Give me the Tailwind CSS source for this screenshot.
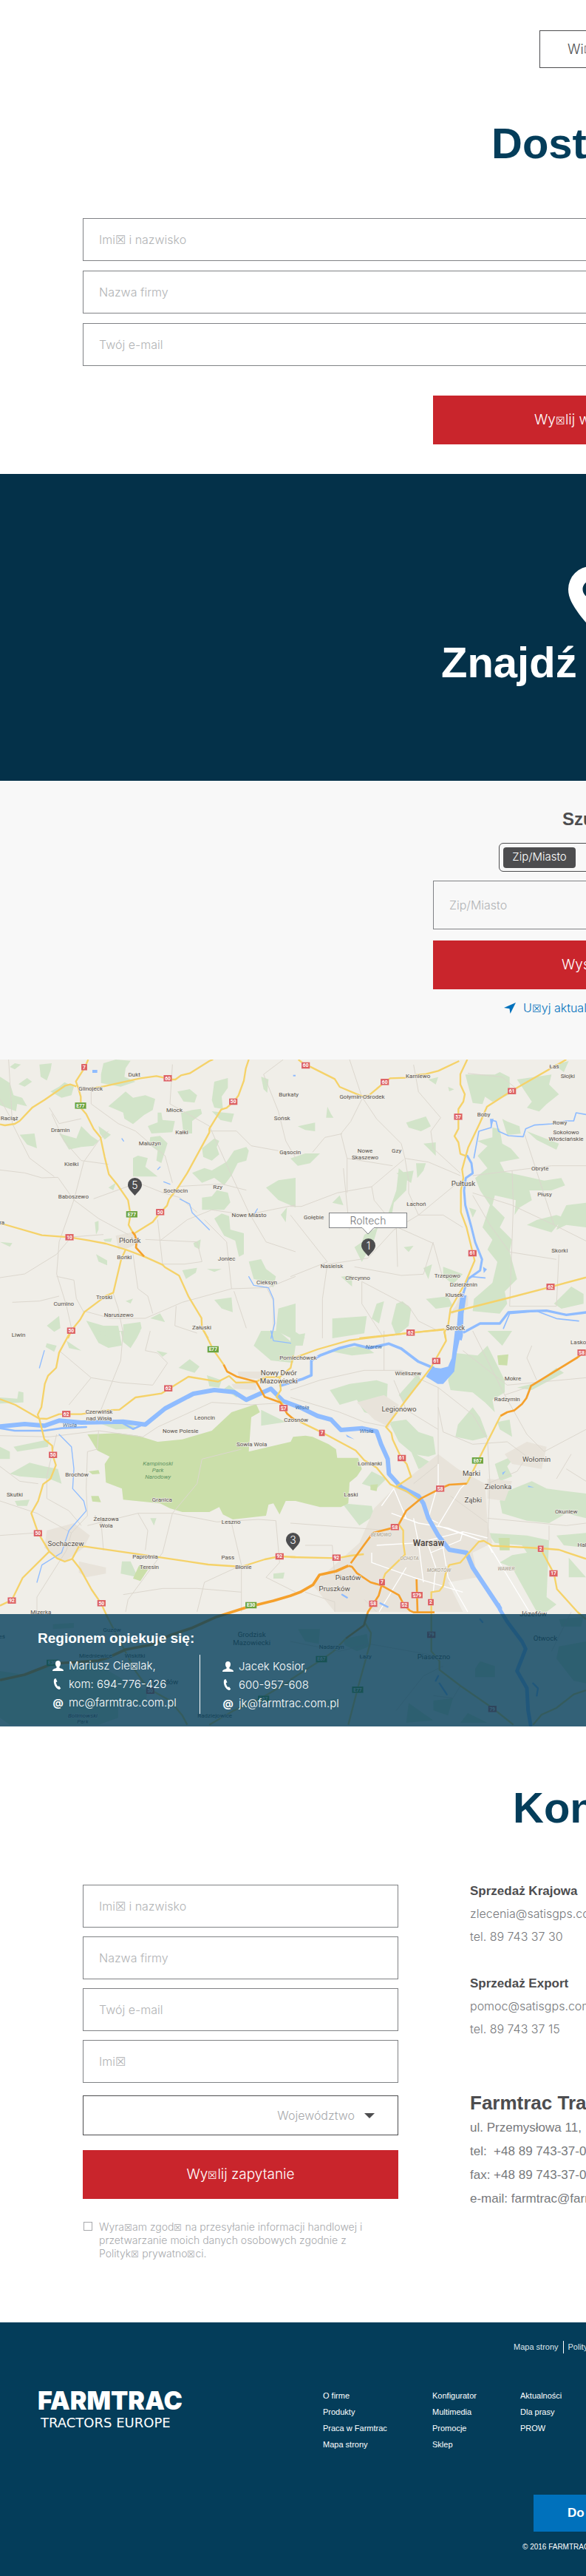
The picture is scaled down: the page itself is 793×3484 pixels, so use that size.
<!DOCTYPE html>
<html lang="pl">
<head>
<meta charset="utf-8">
<meta name="viewport" content="width=device-width, initial-scale=1">
<title>Farmtrac Tractors Europe</title>
<script src="https://cdn.jsdelivr.net/npm/@tailwindcss/browser@4"></script>
</head>
<body class="overflow-x-hidden bg-white font-['Liberation_Sans',Arial,sans-serif] text-[17px] text-[#4d4d4f]">

<section class="overflow-hidden pt-[41px] pb-10">
  <div class="pl-[730px]">
    <a href="#wiecej" class="flex h-[51px] w-[140px] items-center whitespace-nowrap border border-[#4d4d4f] pl-[37px] font-['Inter'] text-lg font-light">Wi<span class="text-sm leading-none">☒</span>cej</a>
  </div>
  <h2 class="mt-[72px] whitespace-nowrap pl-[665px] text-[58px] leading-[60px] font-bold text-[#043d5a]">Dostępne</h2>
  <form class="mt-[71px] font-['Inter'] text-base font-light">
    <div class="flex min-w-[1600px] flex-col gap-[13px] px-28">
      <input aria-label="Imię i nazwisko" placeholder="Imi☒ i nazwisko" class="h-[58px] border border-[#808285] px-[21px] placeholder:text-[#b1b3b5]">
      <input aria-label="Nazwa firmy" placeholder="Nazwa firmy" class="h-[58px] border border-[#808285] px-[21px] placeholder:text-[#b1b3b5]">
      <input aria-label="Twój e-mail" type="email" placeholder="Twój e-mail" class="h-[58px] border border-[#808285] px-[21px] placeholder:text-[#b1b3b5]">
    </div>
    <div class="mt-10 pl-[586px]">
      <button type="button" class="h-[66px] w-[428px] whitespace-nowrap bg-[#c9252c] pl-[137px] text-left text-[19px] text-white">Wy<span class="text-sm leading-none">☒</span>lij wiadomo<span class="text-sm leading-none">☒</span>ć</button>
    </div>
  </form>
</section>

<section class="overflow-hidden bg-[#043149] pt-[125px] pb-[130px] text-white">
  <div class="pl-[769px]">
    <svg class="h-[84px] w-[62px]" viewBox="0 0 62 84" aria-hidden="true"><path fill="#fff" fill-rule="evenodd" d="M31 0a31 31 0 0 0-31 31c0 12 6 21 15 34 6 8 12 14 16 19 4-5 10-11 16-19 9-13 15-22 15-34A31 31 0 0 0 31 0Zm0 19.500a11.500 11.500 0 1 1 0 23 11.500 11.500 0 0 1 0-23Z"/></svg>
  </div>
  <h2 class="mt-4 whitespace-nowrap pl-[597px] text-[58px] leading-[60px] font-bold">Znajdź dealera</h2>
</section>

<section class="overflow-hidden bg-[#f8f8f8] pt-9 pb-[58px]">
  <h3 class="whitespace-nowrap pl-[761px] text-2xl leading-8 font-bold">Szukaj po</h3>
  <div class="mt-4 pl-[675px]">
    <div class="flex h-[39px] w-[250px] items-center rounded-md border border-[#4d4d4f] px-[5px]">
      <button type="button" class="h-7 w-[98px] rounded bg-[#4d4d4f] font-['Inter'] text-[15px] font-light text-white">Zip/Miasto</button>
    </div>
  </div>
  <div class="mt-3 flex flex-col gap-[15px] pl-[586px] font-['Inter'] font-light">
    <input aria-label="Zip/Miasto" placeholder="Zip/Miasto" class="h-[66px] w-[428px] border border-[#808285] px-[21px] text-base placeholder:text-[#b1b3b5]">
    <button type="button" class="h-[66px] w-[428px] bg-[#c9252c] pl-[174px] text-left text-[19px] text-white">Wyszukaj</button>
  </div>
  <a href="#lokalizacja" class="mt-[13px] flex items-center gap-[10px] whitespace-nowrap pl-[682px] font-['Inter'] text-base leading-6 font-light text-[#0071bc]">
    <svg class="h-[15px] w-4 shrink-0" viewBox="0 0 16 15" aria-hidden="true"><path fill="#0071bc" d="M16 0 0 7l7.500 1.200L8.500 15Z"/></svg>
    <span>U<span class="text-sm leading-none">☒</span>yj aktualnej lokalizacji</span>
  </a>
</section>

<section class="relative h-[902px] overflow-hidden bg-[#f0eee8]" aria-label="Mapa dealerów">
  <svg class="block h-full w-full" viewBox="0 0 2379 2706" preserveAspectRatio="xMidYMid slice" font-family="Roboto, sans-serif">
    <!-- woodland -->
    <g fill="#d2e4c9">
      <path d="M0 70 40 95 55 145 90 155 110 190 70 180 65 210 0 185ZM160 20 210 15 205 45 190 85 165 70ZM75 100 110 75 130 90 100 110ZM205 130 240 110 262 92 300 110 290 145 250 155ZM410 60 420 15 470 0 530 5 510 35 505 70 550 90 490 110 410 95ZM440 190 510 130 540 155 590 145 630 160 620 205 585 225 540 262 505 240 500 215ZM720 130 770 120 800 145 790 175 745 170ZM870 90 925 75 925 115 900 150 905 200 870 195 860 165ZM600 270 640 255 640 215 655 215 660 245 710 250 700 295 615 300ZM735 215 780 205 815 200 820 220 780 250 780 300 745 300ZM860 210 950 220 940 255 895 245ZM240 300 310 320 330 270 370 310 400 330 380 350 330 355 280 365ZM400 270 450 305 425 325 405 300ZM540 400 560 390 600 400 590 435 640 475 540 475ZM610 315 650 310 680 340 655 420 635 410 640 370 605 345ZM820 360 870 320 890 330 880 355 890 385 860 410 825 395ZM780 460 830 440 860 450 920 415 950 370 1000 355 1010 370 1000 410 965 420 940 470 910 510 870 480 820 500ZM820 560 860 555 880 530 925 540 935 580 910 610 820 610ZM1080 520 1130 490 1200 480 1200 600 1130 570ZM870 645 900 625 930 635 935 690 990 705 990 790 970 800 955 735 910 715ZM1010 820 1060 810 1080 850 1120 880 1110 925 1070 900 1030 890ZM870 975 940 965 945 1025 900 1010ZM80 305 140 300 150 360 110 345ZM85 20 60 40 40 30 60 15ZM385 660 400 655 400 690 390 710ZM390 790 435 815 435 835 400 820ZM420 730 455 725 450 740 425 738ZM740 855 800 845 795 865 755 890ZM785 745 815 730 810 770 790 760ZM840 850 900 850 870 862ZM190 1080 240 1040 245 1090 220 1105ZM350 1060 420 1080 480 1080 495 1160 440 1170 400 1150ZM500 1075 570 1065 575 1090 540 1150 500 1130ZM0 740 50 745 40 760ZM1060 70 1090 80 1085 135 1070 120ZM440 520 470 500 460 530ZM510 980 540 970 530 990ZM610 1050 650 1030 670 1065ZM1140 630 1165 600 1160 660ZM1130 1010 1200 990 1200 1140 1120 1100Z"/>
      <g transform="translate(1179 -9)"><path d="M560 90 600 80 590 110ZM640 120 665 130 645 138ZM710 70 830 70 850 60 890 80 890 150 820 180 790 160 780 190 740 185ZM920 90 1060 70 1050 110 1090 150 1040 190 1010 220 960 205 980 180ZM1070 30 1130 15 1110 60ZM150 200 165 230 175 245 145 245ZM470 265 550 240 570 280 530 300 480 285ZM540 350 590 345 590 400 560 370ZM30 280 100 265 100 300 60 295ZM820 285 850 290 860 350 895 370 930 410 850 425 870 465 940 480 1030 500 1100 490 1115 520 1060 540 970 540 980 580 930 610 910 640 915 580 830 560 820 600 870 650 850 690 900 740 890 790 920 900 870 950 880 1000 850 1040 740 1030 745 980 820 915 840 830 800 780 820 740 780 690 810 600 770 540 750 490 800 450 760 400 800 360 760 340 820 325ZM860 250 880 260 930 280 935 310 880 315ZM960 300 1090 350 1080 375 1000 335ZM510 430 550 430 540 460 515 490ZM440 450 475 480 470 540 420 590 410 650 395 640 430 540ZM430 470 500 460 490 510ZM1120 600 1200 590 1200 690 1120 680 1080 700 1100 640ZM1000 660 1080 640 1110 650 1060 710 960 680ZM725 610 755 620 740 650ZM260 770 290 750 300 720 355 690 340 740 290 830ZM0 410 60 390 120 390 80 430 30 440ZM170 590 200 560 215 600ZM540 855 575 840 560 900ZM620 850 700 880 660 920 620 890ZM460 770 500 765 480 790ZM205 890 250 885 250 930ZM550 980 640 970 660 1010 590 1020ZM410 1080 430 1000 455 990 490 1020 480 1090 430 1130ZM1070 1000 1140 930 1190 960 1190 1000 1100 1020ZM170 1060 310 1050 300 1120 170 1140ZM350 1000 380 990 360 1080 330 1060ZM0 1100 60 1140 0 1140Z"/></g>
      <g transform="translate(0 1101)"><path d="M380 5 430 0 490 0 460 35 440 25ZM490 0 570 0 555 30 530 70 500 45ZM725 150 770 115 810 145 790 170ZM635 80 680 90 660 105ZM0 270 70 275 75 245 95 250 95 290 0 295ZM40 580 120 535 180 550 235 560 250 620 200 600 80 590ZM0 470 40 490 40 520 0 520ZM55 470 200 440 195 470 70 490ZM390 370 520 375 560 395 470 400ZM495 935 530 935 560 1000 490 985ZM1060 0 1130 0 1200 60 1190 130 1100 120 1030 60ZM1060 320 1130 355 1160 370 1060 385ZM190 50 230 60 220 85 185 65ZM270 40 330 80 280 70ZM60 690 120 685 110 710 70 710ZM610 760 635 760 625 790ZM1110 985 1155 980 1150 1005 1110 1005ZM840 180 900 200 890 230 850 225ZM930 220 980 260 960 270 910 235Z"/></g>
      <g transform="translate(1179 1101)"><path d="M160 240 240 215 350 200 395 215 390 300 370 350 300 330 270 280 200 300ZM400 370 470 360 520 410 580 430 590 500 560 510 500 500 440 450ZM440 260 520 170 530 210 460 290ZM670 90 760 100 800 60 820 100 870 200 870 250 820 280 830 330 790 290 740 250 650 240 640 200ZM680 380 740 310 770 350 800 430 740 445 670 430ZM800 0 900 0 860 60ZM920 230 1000 210 1080 150 1110 170 980 240ZM840 370 890 360 900 430 850 400ZM830 540 920 500 880 550 900 590 850 610ZM880 650 980 610 1040 640 1200 660 1200 760 1120 740 1050 780 960 770 860 740 850 690ZM490 490 580 540 520 560ZM290 620 330 570 390 600 350 640ZM210 700 330 710 340 750 280 790ZM800 820 960 830 1050 850 1040 1080 1080 1110 1040 1140 1000 1140 900 960 850 940 900 910 960 900 940 870 830 860ZM1080 830 1200 820 1200 880 1110 870ZM150 80 300 60 340 90 250 100ZM0 20 60 10 50 60 0 60ZM1130 920 1200 1000 1130 1000Z"/></g>
      <g transform="translate(1179 2001)"><path d="M30 310 120 310 115 370 60 360ZM215 350 310 330 320 380 270 400 220 375ZM750 470 770 440 830 460 830 505 750 505ZM1080 430 1090 380 1200 360 1200 530 1150 520ZM580 600 660 590 640 660 580 640ZM480 610 580 680 470 690ZM1090 270 1190 260 1180 300 1100 300ZM720 650 800 690 690 690ZM130 600 190 590 180 640Z"/></g>
      <path transform="translate(0 2151)" d="M0 330 100 345 200 310 390 300 510 370 600 410 590 460 480 470 480 520 400 548 40 548 0 520ZM215 140 300 135 300 155 215 160Z"/>
    </g>
    <path fill="#cbdfaa" transform="translate(0 1101)" d="M355 420 480 415 560 425 640 450 740 440 860 405 940 330 1040 297 1055 330 1020 350 1010 490 1180 450 1190 430 1240 425 1269 430 1334 460 1364 480 1369 515 1454 515 1469 560 1449 590 1419 615 1414 700 1384 715 1299 715 1200 690 1160 690 1135 745 1110 700 1090 705 1080 750 945 765 905 745 890 715 850 735 740 735 690 720 650 700 500 685 495 640 430 615 425 540 445 510 395 485ZM565 950 610 955 570 1015 540 1005ZM360 570 400 565 405 580 375 582ZM370 670 400 670 410 695 375 692Z"/>
    <path fill="#cbdfaa" transform="translate(1179 1101)" d="M650 640 690 640 685 665 650 662ZM590 700 620 695 615 720 595 722ZM840 100 885 95 880 140 845 138ZM845 840 890 840 890 890 850 890ZM325 625 355 622 350 650 325 645Z"/>
    <!-- built-up land -->
    <g fill="#e8e3da">
      <path transform="translate(0 1101)" d="M965 165 1100 165 1060 195 970 190ZM320 935 430 960 430 985 350 1000 320 980ZM190 810 300 780 365 830 340 880 260 940 180 880ZM940 215 1040 210 1040 240 950 235Z"/>
      <path transform="translate(1179 1101)" d="M270 290 380 260 440 300 400 390 340 360ZM420 640 500 580 600 500 680 560 790 620 800 780 820 860 740 900 760 1000 640 1020 700 1140 180 1140 90 1030 280 860 340 720ZM870 500 960 450 1040 470 1020 560 900 540ZM800 600 900 610 870 690 800 680Z"/>
      <path d="M470 715 540 700 570 740 520 765 480 770ZM1820 1040 1900 1000 1900 960 1870 950 1850 1000Z"/>
    </g>
    <!-- local roads -->
    <g fill="none" stroke="#dcd7ce" stroke-width="3" stroke-linejoin="round">
      <path d="M35 0 45 170 50 260 120 400 220 475M0 448 100 460 170 480 235 478 300 570 400 645 520 710M300 570 340 415 400 330 440 290M45 240 0 160M200 195 240 260 330 240M210 220 260 330 330 410 440 425M370 110 370 180 480 260 550 290 620 350 670 390 700 500M300 570 240 740 230 870 270 1000 290 1090M0 885 100 870 230 790 290 720 420 710M230 880 300 895 310 970 340 1025M50 985 160 980 240 960M700 20 690 180 850 270 940 470 1010 620 1080 740 1200 780M850 290 960 290 1020 350 1130 370M1150 0 1070 60 1130 210 1160 330 1200 400M380 565 560 500 660 540 730 560 800 620M720 515 900 505 1000 530M640 650 660 830 750 830 820 820 800 740 590 730M650 735 760 650 860 610 1000 630 1200 590M540 790 560 930 600 960 620 1030M940 930 920 740 830 650M460 950 480 1010 500 1110M340 1020 450 1050 590 1050 740 985 940 930 1090 925 1200 880M715 1000 710 1080 800 1110M950 940 1000 1090M1080 920 1110 980 1110 1100"/>
      <g transform="translate(1179 -9)"><path d="M240 9 290 160 350 250 450 350 465 410 560 425 690 480M290 170 245 260 205 310 230 410 415 440M90 385 140 325 210 310M500 30 520 140 610 245 570 300 580 370 690 470M230 410 230 550M0 605 45 605 190 550 330 525 460 415M330 525 340 580 430 690 435 850M465 410 480 500 480 550 520 640M240 700 215 450M0 640 150 830 0 890M520 640 620 640 700 690M420 700 520 640 690 500M150 840 315 815 420 700M150 840 130 980 130 1140M290 910 290 1000 380 1140M290 910 480 1010 520 1070 600 1110M260 850 450 885 540 880 580 750M740 550 900 600 1070 680 1200 745M740 480 900 460 1060 440 1200 440M900 460 905 600 890 1010 1080 1010 1090 800M740 560 810 680 890 790 1080 820M1070 680 950 310M920 130 860 80 720 65M435 690 580 755 620 900"/></g>
      <g transform="translate(0 1101)"><path d="M0 425 200 430 400 405 580 430 640 390 860 290 1020 300 1180 290M400 405 395 480 355 490 350 640 355 750 290 820 270 890 150 1080 150 1140M355 790 560 740 700 740 880 775 1050 765 1120 770 1135 940M500 0 490 120 410 320M330 790 280 730 190 680 190 590 230 420M0 690 150 740 290 820M700 740 800 620 820 520 980 480M940 780 980 950 980 1140M0 830 140 820M700 740 660 900 520 1090 510 1140M410 770 420 890M560 740 600 810 590 890M0 550 80 610 155 620M370 190 490 210 620 220 680 130 640 90 590 80 610 0M240 80 370 190 280 300M500 1070 660 1045 800 1045 980 1060M800 1140 830 1020 960 960M1135 940 1080 1000 1200 1060"/></g>
      <g transform="translate(1179 1101)"><path d="M0 240 120 200 300 160 450 160 600 230 740 340 800 440 810 620 800 860M0 270 200 330 300 370 400 390M600 230 600 540 500 620M600 310 620 410 740 460 880 450 960 510M740 0 870 260 960 230M870 260 960 420 1030 490 1200 400M800 620 920 570 960 510M700 80 880 220 1200 190M380 0 380 160M420 200 470 320 600 400M0 780 270 800 400 810M60 870 170 870 180 1000M800 760 1120 790 1200 780M1080 600 1140 500M1200 610 1120 560M980 60 960 110 1000 200M650 670 800 780M1050 850 1050 790M60 1060 180 1100 180 1140M350 1140 300 1090"/></g>
      <path transform="translate(1179 2001)" d="M0 360 200 400 320 370 600 420M690 540 660 590 580 580M1140 240 1060 400M430 640 540 500 620 460"/>
    </g>
    <g fill="none" stroke="#fff" stroke-width="4" transform="translate(1179 1101)">
      <path d="M410 740 520 780 640 800 800 860M350 870 520 860 700 815 800 840M330 900 330 940 500 1000 600 1030 700 1060M500 760 520 860 540 1020M600 790 690 640 710 620M370 710 420 640M420 640 470 760M600 540 600 620 560 760 600 780M560 870 590 960 580 1060M620 880 640 1000 720 1140M700 815 690 850 570 900M800 860 970 1140M470 960 360 1140M820 900 800 860 600 790"/>
    </g>
    <!-- rivers -->
    <g fill="none" stroke="#8fbcff" stroke-linejoin="round" stroke-linecap="round">
      <path transform="translate(0 1101)" stroke-width="18" d="M0 388 100 378 180 385 240 364 330 372 500 368 590 380 670 315 785 255 870 240 950 248 1000 280 1040 262 1100 235 1150 285 1219 311 1289 345 1344 360 1384 402 1469 395 1529 408 1547 460 1574 520 1579 580 1629 635 1699 670 1719 700 1739 760 1779 830 1824 888 1894 900 1919 960 1969 1035 2029 1125"/>
      <path transform="translate(0 1101)" stroke-width="8" d="M0 395 60 405 180 405 250 395 350 390M490 370 540 398 570 385"/>
      <path transform="translate(1179 2001)" stroke-width="15" d="M850 230 880 280 940 360 955 390 920 480 960 550 965 640 975 698"/>
      <path transform="translate(1179 2001)" stroke-width="7" d="M770 270 780 282M590 520 600 500M605 530 635 575M985 530 1005 550 1000 580M210 170 230 182M365 205 395 220"/>
      <path transform="translate(1179 1101)" stroke-width="11" d="M-40 222 50 195 85 180 85 120 120 100 200 70 260 55 320 70 400 52 450 72 520 125 580 150"/>
      <path transform="translate(1179 -9)" stroke-width="9" d="M700 965 720 900 770 865 778 820 750 750 735 690 710 600 705 540 712 490 740 470 735 430 718 400"/>
      <path transform="translate(1179 -9)" stroke-width="5" d="M745 408 765 300 815 285 815 255 835 260 845 300 885 318 945 322 955 290 990 275 1060 270 1120 258 1150 258 1160 225 1200 232M735 890 790 895M865 1100 890 1040 1000 1030 1080 1060 1170 1070"/>
      <path transform="translate(1179 -9)" stroke-width="10" d="M705 1115 770 1080 850 1080 885 1035 960 1030 1040 1028 1120 1045 1200 1035"/>
      <path transform="translate(0 -9)" stroke-width="4" d="M730 575 770 595 780 630 850 700M1030 640 1045 615M665 505 690 515M640 455 650 445M495 330 502 340M1010 890 1030 925 1090 935 1110 980 1115 1080 1100 1140"/>
      <path transform="translate(0 1101)" stroke-width="4" d="M240 420 290 470 300 560 295 640 340 690 350 730 280 810 250 900 170 950 150 1020M1100 0 1110 40 1180 50M180 80 160 150"/>
    </g>
    <g fill="#8fbcff">
      <path transform="translate(1179 1101)" d="M550 185 575 148 610 152 640 145 655 110 668 0 695 0 675 90 665 165 620 215 598 215ZM850 1105 862 1140 835 1110ZM225 420 260 440 230 430ZM860 575 875 568 862 585ZM965 628 990 635 965 634Z"/>
      <path transform="translate(1179 -9)" d="M690 970 715 965 703 1040 700 1130 695 1150 672 1140 680 1040ZM782 850 798 860 785 875ZM810 250 825 250 815 290Z"/>
      <path d="M375 42 395 42 395 54 375 54ZM1190 62 1200 62 1200 68 1190 68Z"/>
    </g>
    <!-- national roads -->
    <g fill="none" stroke="#f5d269" stroke-width="7" stroke-linejoin="round">
      <path transform="translate(0 -9)" d="M0 272 20 276 60 270 80 258 132 203 180 173 265 115 285 110 310 118M358 9 345 40 308 98 318 125 328 160 328 205 350 230 380 290 408 325 425 405 442 475 475 515 520 580 530 640 522 680 540 712M360 128 420 118 570 85 635 76 700 90 712 90 735 73 770 65 850 15 865 9M1010 9 998 45 990 95 968 155 947 182 920 205 898 212 850 290 850 305 760 470 718 535 687 575 678 602 650 630 620 668 545 715M0 675 18 678 170 722 282 730 360 743 430 756 510 780 585 808 660 842 670 852 727 886 765 970 818 1058 820 1100 845 1140M510 780 492 820 480 870 460 955 430 968 343 1033 325 1065 290 1108 276 1140"/>
      <path transform="translate(1179 -9)" d="M32 9 62 33 80 38 180 88 200 120 290 158 318 155 380 103 405 85 470 83 510 72 550 68 600 55 685 15M718 9 690 68 690 110 708 150 702 180 682 210 682 290 666 320 682 345 690 392 712 400M1120 9 900 135 798 200 770 265 722 365 712 400 697 455 702 490 692 540 692 628 715 690 748 825 710 915 650 1020 640 1090 625 1115 630 1140M1200 893 1056 932 890 975 652 1035M280 1140 490 1118 625 1103"/>
      <path transform="translate(0 1101)" d="M288 0 240 88 228 150 195 182 182 215 168 310 153 340 160 358 180 440 212 466 214 505 227 545 205 600 175 622 155 690 127 740 155 820 200 895 232 923 263 936 293 925 320 875 345 875 590 910 845 948 980 957 1075 927 1135 915 1200 918M293 925 325 965 372 1050 410 1105 440 1170M200 895 92 1002 48 1092 0 1115M0 277 62 300 157 355 190 357 240 338 330 338 430 322 485 320 550 270 655 254 765 186 885 206 930 183 958 210 1035 208 1080 188 1135 188 1180 150 1190 100M828 0 865 75 908 137M1135 188 1140 240 1122 268 1150 300"/>
      <path transform="translate(1179 1101)" d="M0 115 110 75 240 38 485 8 625 -5M625 0 632 40 570 150 470 280 388 390 410 415 415 440 450 515 472 540 490 592 428 633M0 350 128 412 265 485 300 525 350 555 405 622 428 633 470 650 520 685M0 918 190 922 245 912 298 906M440 785 458 810 458 860 465 908 385 985 372 1020M853 345 765 520 716 620M1200 925 1090 888 1015 882 820 872 785 852 765 855 690 940 645 950 630 985 620 1035 605 1055 572 1060 572 1140M1015 882 1070 985 1082 1048 1165 1140"/>
      <path transform="translate(1179 2001)" d="M572 240 572 400 605 440 605 475 690 540 820 630 905 698M1165 240 1200 270M1200 558 1150 575 1080 630 1020 657 985 698M300 280 327 325 323 370 272 555 235 698M225 348 175 400 130 432 0 515"/>
      <path transform="translate(0 2151)" d="M430 100 500 235 550 330 600 400 690 450 740 510 760 548M850 548 950 490 1060 440 1180 370"/>
    </g>
    <g fill="none" stroke="#f5a02c" stroke-width="8" stroke-linejoin="round">
      <path d="M537 699 548 713 555 736 552 763 585 799"/>
      <path transform="translate(0 1101)" d="M908 137 922 165 960 185 1040 206 1075 268 1138 290 1165 335 1200 365"/>
      <path transform="translate(1179 1101)" d="M1200 80 1165 108 977 223 958 273 940 297 908 323 880 330 853 345M716 620 645 624 608 640 530 680 470 730 440 785 425 797 335 820 298 870 245 943M512 1008 516 1140M235 953 250 957 270 983 325 1020 370 1033 440 1072 460 1110 485 1135 500 1142 585 1142M370 1033 358 1075 315 1140 298 1195 225 1248"/>
      <path transform="translate(0 2151)" stroke-width="11" d="M0 367 100 345 215 300 400 288 440 275 510 243 620 222 690 185 780 155 880 110 1000 72 1110 45 1179 25 1219 10 1271 -20 1297 -60 1364 -75 1414 -97"/>
    </g>
    <g id="labels" fill="#57504a" stroke="#f0eee8" stroke-width="4" paint-order="stroke" text-anchor="middle"></g>
    <g id="shields" fill="#fff" font-weight="700" font-size="20" text-anchor="middle"></g>
  </svg>

  <div class="absolute top-[207px] left-[445px] flex h-[21px] w-[106px] items-center justify-center border border-[#808285] bg-white font-['Inter'] text-sm font-light text-[#77797c]">Roltech
    <svg class="absolute top-[19px] left-[44px] h-[10px] w-4" viewBox="0 0 16 10" aria-hidden="true"><path fill="#fff" d="M0 0h16v1L8 9 0 1Z"/><path fill="none" stroke="#808285" d="M0 .5 8 9 16 .5"/></svg>
  </div>
  <button type="button" aria-label="Dealer 5" class="absolute top-[160px] left-[173px] h-6 w-[19px] font-['Inter'] text-sm leading-[19px] font-light text-white">
    <svg class="absolute inset-0 h-full w-full" viewBox="0 0 19 24" aria-hidden="true"><path fill="#4d4d4f" d="M9.500 0A9.500 9.500 0 0 0 0 9.500C0 14 4 18 9.500 24 15 18 19 14 19 9.500A9.500 9.500 0 0 0 9.500 0Z"/></svg>
    <span class="absolute inset-x-0 top-0">5</span>
  </button>
  <button type="button" aria-label="Dealer 1" class="absolute top-[242px] left-[489px] h-6 w-[19px] font-['Inter'] text-sm leading-[19px] font-light text-white">
    <svg class="absolute inset-0 h-full w-full" viewBox="0 0 19 24" aria-hidden="true"><path fill="#4d4d4f" d="M9.500 0A9.500 9.500 0 0 0 0 9.500C0 14 4 18 9.500 24 15 18 19 14 19 9.500A9.500 9.500 0 0 0 9.500 0Z"/></svg>
    <span class="absolute inset-x-0 top-0">1</span>
  </button>
  <button type="button" aria-label="Dealer 3" class="absolute top-[640px] left-[387px] h-6 w-[19px] font-['Inter'] text-sm leading-[19px] font-light text-white">
    <svg class="absolute inset-0 h-full w-full" viewBox="0 0 19 24" aria-hidden="true"><path fill="#4d4d4f" d="M9.500 0A9.500 9.500 0 0 0 0 9.500C0 14 4 18 9.500 24 15 18 19 14 19 9.500A9.500 9.500 0 0 0 9.500 0Z"/></svg>
    <span class="absolute inset-x-0 top-0">3</span>
  </button>

  <div class="absolute inset-x-0 bottom-0 h-[152px] bg-[#043d5a]/80 pt-[21px] pl-[51px] text-white">
    <h3 class="text-[19px] leading-6 font-bold">Regionem opiekuje się:</h3>
    <div class="mt-[10px] flex h-20 font-['Inter'] text-[15px] leading-[25px] font-light">
      <ul class="w-[220px] border-r border-white pt-0.5 pl-5">
        <li class="flex items-center gap-[7px]"><svg class="h-[14px] w-[15px]" viewBox="0 0 15 14" aria-hidden="true"><path fill="#fff" d="M7.500 0C5.300 0 4 1.500 4 3.800c0 2 .7 3.600 1.700 4.400.2 1.300-.5 1.800-2 2.300C1.500 11.200 0 11.800 0 14h15c0-2.200-1.500-2.800-3.700-3.500-1.500-.5-2.200-1-2-2.300 1-.8 1.700-2.400 1.700-4.400C11 1.500 9.700 0 7.500 0Z"/></svg><span>Mariusz Cie<span class="text-xs leading-none">☒</span>lak,</span></li>
        <li class="flex items-center gap-[7px]"><svg class="h-[15px] w-[15px]" viewBox="0 0 15 15" aria-hidden="true"><path fill="#fff" d="M4.500 0 2.500.8C1 3.500 2 9.500 5.500 13c1.500 1.500 3 2 4 2l1.800-1.500L9 10.200 7.500 11C6 9.500 4.800 7 4.800 5l1.700-.6Z"/></svg>kom: 694-776-426</li>
        <li class="flex items-center gap-[7px]"><span class="w-[15px] text-center text-sm font-bold" aria-hidden="true">@</span>mc@farmtrac.com.pl</li>
      </ul>
      <ul class="pt-[3px] pl-[30px]">
        <li class="flex items-center gap-[7px]"><svg class="h-[14px] w-[15px]" viewBox="0 0 15 14" aria-hidden="true"><path fill="#fff" d="M7.500 0C5.300 0 4 1.500 4 3.800c0 2 .7 3.600 1.700 4.400.2 1.300-.5 1.800-2 2.300C1.500 11.200 0 11.800 0 14h15c0-2.200-1.500-2.800-3.700-3.500-1.500-.5-2.200-1-2-2.300 1-.8 1.700-2.400 1.700-4.400C11 1.500 9.700 0 7.500 0Z"/></svg>Jacek Kosior,</li>
        <li class="flex items-center gap-[7px]"><svg class="h-[15px] w-[15px]" viewBox="0 0 15 15" aria-hidden="true"><path fill="#fff" d="M4.500 0 2.500.8C1 3.500 2 9.500 5.500 13c1.500 1.500 3 2 4 2l1.800-1.500L9 10.200 7.500 11C6 9.500 4.800 7 4.800 5l1.700-.6Z"/></svg>600-957-608</li>
        <li class="flex items-center gap-[7px]"><span class="w-[15px] text-center text-sm font-bold" aria-hidden="true">@</span>jk@farmtrac.com.pl</li>
      </ul>
    </div>
  </div>
</section>

<section class="overflow-hidden pt-20 pb-[84px]">
  <h2 class="whitespace-nowrap pl-[694px] text-[58px] leading-[60px] font-bold text-[#043d5a]">Kontakt</h2>
  <div class="mt-[67px] flex gap-[97px] pl-28">
    <form class="w-[427px] shrink-0 pt-[7px] font-['Inter'] text-base font-light">
      <div class="flex flex-col gap-3">
        <input aria-label="Imię i nazwisko" placeholder="Imi☒ i nazwisko" class="h-[58px] border border-[#808285] px-[21px] placeholder:text-[#b1b3b5]">
        <input aria-label="Nazwa firmy" placeholder="Nazwa firmy" class="h-[58px] border border-[#808285] px-[21px] placeholder:text-[#b1b3b5]">
        <input aria-label="Twój e-mail" type="email" placeholder="Twój e-mail" class="h-[58px] border border-[#808285] px-[21px] placeholder:text-[#b1b3b5]">
        <input aria-label="Imię" placeholder="Imi☒" class="h-[58px] border border-[#808285] px-[21px] placeholder:text-[#b1b3b5]">
      </div>
      <div class="relative mt-[17px]">
        <select aria-label="Województwo" class="block h-[54px] w-full appearance-none border border-[#4d4d4f] bg-white pr-[58px] text-[#a7a9ac] [text-align-last:right]"><option>Województwo</option></select>
        <svg class="pointer-events-none absolute top-6 right-8 h-[7px] w-[14px]" viewBox="0 0 14 7" aria-hidden="true"><path fill="#4d4d4f" d="M0 0h14L7 7Z"/></svg>
      </div>
      <button type="button" class="mt-5 h-[66px] w-full bg-[#c9252c] text-[19px] text-white">Wy<span class="text-sm leading-none">☒</span>lij zapytanie</button>
      <label class="mt-[29px] flex gap-[9px] text-sm leading-[18px] text-[#a7a9ac]">
        <input type="checkbox" class="mt-0.5 ml-px h-3 w-3 shrink-0 appearance-none border border-[#a7a9ac]">
        <span>Wyra<span class="text-xs leading-none">☒</span>am zgod<span class="text-xs leading-none">☒</span> na przesyłanie informacji handlowej i<br>przetwarzanie moich danych osobowych zgodnie z<br>Polityk<span class="text-xs leading-none">☒</span> prywatno<span class="text-xs leading-none">☒</span>ci.</span>
      </label>
    </form>
    <address class="whitespace-nowrap not-italic">
      <div class="leading-[31px]">
        <h3 class="font-bold">Sprzedaż Krajowa</h3>
        <div class="font-['Inter'] text-base leading-[31px] font-light text-[#77797c]">
          <p>zlecenia@satisgps.com</p>
          <p>tel. 89 743 37 30</p>
        </div>
      </div>
      <div class="mt-8 leading-[31px]">
        <h3 class="font-bold">Sprzedaż Export</h3>
        <div class="font-['Inter'] text-base leading-[31px] font-light text-[#77797c]">
          <p>pomoc@satisgps.com</p>
          <p>tel. 89 743 37 15</p>
        </div>
      </div>
      <div class="mt-[66px] leading-8 text-[#77797c]">
        <h3 class="text-[26px] leading-9 font-bold text-[#4d4d4f]">Farmtrac Tractors</h3>
        <p>ul. Przemysłowa 11,</p>
        <p>tel:&nbsp; +48 89 743-37-00</p>
        <p>fax: +48 89 743-37-01</p>
        <p>e-mail: farmtrac@farmtrac.pl</p>
      </div>
    </address>
  </div>
</section>

<footer class="overflow-hidden bg-[#043d5a] pt-[25px] pb-[31px] text-[11px] text-white">
  <nav class="flex h-[17px] whitespace-nowrap pl-[695px] leading-4 text-[#dfe6eb]">
    <a href="#mapa" class="border-r border-white pr-1.5">Mapa strony</a>
    <a href="#polityka" class="pl-1.5">Polityka prywatności</a>
  </nav>
  <div class="mt-[46px] flex pl-[51px] leading-[22px]">
    <a href="#start" class="w-[386px] shrink-0">
      <span class="block font-['Inter'] text-[34px] leading-9 font-black">FARMTRAC</span>
      <span class="block pl-1 font-['DejaVu_Sans'] text-lg leading-6">TRACTORS EUROPE</span>
    </a>
    <ul class="w-[148px] shrink-0">
      <li><a href="#firma">O firme</a></li><li><a href="#produkty">Produkty</a></li><li><a href="#praca">Praca w Farmtrac</a></li><li><a href="#mapa">Mapa strony</a></li>
    </ul>
    <ul class="w-[119px] shrink-0">
      <li><a href="#konfigurator">Konfigurator</a></li><li><a href="#multimedia">Multimedia</a></li><li><a href="#promocje">Promocje</a></li><li><a href="#sklep">Sklep</a></li>
    </ul>
    <ul class="shrink-0">
      <li><a href="#aktualnosci">Aktualności</a></li><li><a href="#prasa">Dla prasy</a></li><li><a href="#prow">PROW</a></li>
    </ul>
  </div>
  <div class="mt-[57px] pl-[722px]">
    <a href="#top" class="flex h-[50px] w-[156px] items-center whitespace-nowrap bg-[#0071bc] pl-[46px] text-[17px] font-bold">Do góry</a>
  </div>
  <p class="mt-[13px] whitespace-nowrap pl-[707px] text-[10px] leading-4">© 2016 FARMTRAC</p>
</footer>

<script>
// Place names: [text, centre x, baseline y, font size, style]; one map unit is a third of a pixel.
const places = [
  ["Dukt",545,69],["Glinojeck",368,127],["Raciąż",38,245],["Dramin",245,293],["Kiełki",290,432],["Baboszewo",298,563],["Młock",708,214],["Kałki",738,304],["Malużyn",608,348],["Sochocin",713,541],["Rzy",884,524],["Nowe Miasto",1011,639],["Płońsk",527,745,29],["Bońki",505,809],["Joniec",920,815],["Cieksyn",1083,911],["Troski",423,971],["Cumino",259,998],["Naruszewo",482,1045],["Załuski",819,1094],["Liwin",75,1124],["Burkaty",1172,151],["Sońsk",1145,246],["Gąsocin",1178,384],["ra",8,670],
  ["Karniewo",1697,74],["Gołymin-Ośrodek",1470,158],["Łaś",2250,36],["Słojki",2305,76],["Boby",1964,231],["Rowy",2273,264],["Sokołowo",2298,302],["Włościańskie",2298,330],["Nowe",1482,379],["Skaszewo",1482,406],["Gzy",1610,377],["Obryte",2192,450],["Pułtusk",1881,512,29],["Płusy",2211,554],["Łachoń",1690,594],["Gołębie",1274,648],["Skorki",2272,783],["Nasielsk",1347,847],["Chrcynno",1452,895],["Trzepowo",1816,884],["Dzierżenin",1882,922],["Klusek",1844,963],["Serock",1849,1097,25],
  ["Nowy Dwór",1132,1280,29],["Mazowiecki",1132,1313,29],["Pomiechówek",1210,1218],["Czerwińsk",402,1436],["nad Wisłą",402,1463],["Leoncin",831,1461],["Nowe Polesie",733,1515],["Czosnów",1202,1469],["Sowia Wola",1022,1569],["Brochów",312,1691],["Skutki",60,1773],["Granica",658,1794],["Żelazowa",431,1871],["Wola",431,1898],["Leszno",938,1884],["Sochaczew",267,1973,29],["Paprotnia",589,2026],["Teresin",606,2068],["Pass",925,2029],["Błonie",988,2068],["Mizerka",166,2250],
  ["Wieliszew",1657,1282],["Laskowo",2364,1156],["Mokre",2082,1303],["Radzymin",2059,1386],["Legionowo",1620,1429,29],["Łomianki",1502,1648],["Laski",1425,1774],["Marki",1914,1688,29],["Wołomin",2178,1632,29],["Zielonka",2022,1744,29],["Ząbki",1921,1796,29],["Okuniew",2299,1841],["Halinów",2388,1976],["Piastów",1413,2113,29],["Pruszków",1358,2156,29],["Józefów",2165,2260,29],
  ["Guzów",455,2322],["Miedniewice",388,2427],["Wiskitki",548,2427],["Grodzisk",1022,2344,29],["Mazowiecki",1022,2377,29],["Nadarzyn",1346,2392],["Łazy",1484,2430],["Piaseczno",1761,2433,29],["Otwock",2214,2359,29],["Żyrardów",664,2535,29],["Radziejowice",872,2669],["Bolimowski",336,2669,24,"i"],["Park",336,2695,24,"i"],["eś",8,2348],
  ["Warsaw",1740,1975,36,"b"],["Kampinoski",641,1646,24,"g"],["Park",641,1673,24,"g"],["Narodowy",641,1700,24,"g"],["Wisła",283,1490,24,"w"],["Wisła",1227,1420,24,"w"],["Wisła",1488,1516,24,"w"],["Narew",1518,1172,24,"w"],["BEMOWO",1547,1936,20,"d"],["OCHOTA",1662,2031,20,"d"],["MOKOTÓW",1782,2080,20,"d"],["WAWER",2055,2074,20,"d"]
];
// Road numbers: [number, centre x, centre y]
const roads = [
  ["7",342,31],["60",681,76],["50",947,171],["E77",327,187],["E77",535,628],["50",650,619],["10",282,721],["50",289,1100],["60",1241,24],["60",1562,91],["61",2078,128],["57",1860,232],["61",1918,786],["62",2235,922],["62",1667,1108],
  ["E77",865,1176],["62",683,1334],["62",269,1438],["50",215,1604],["S7",1151,1414],["50",154,1922],["92",1135,2016],["92",48,2195],["50",412,2206],["E30",1019,2214],
  ["61",1771,1223],["S8",2361,1189],["7",1307,1515],["61",1631,1617],["E67",1939,1627],["S8",1787,1741],["S8",1603,1897],["2",2195,1985],["17",2247,2085],["92",1366,2021],["7",1551,2121],["S8",1515,2208],["S79",1693,2173],["S2",1642,2214],["2",1749,2202],["79",1751,2334],["79",1999,2635],["E67",1305,2433],["E77",1452,2557],["50",610,2561],["E30",212,2448],["E67",1070,2594]
];
const NS = "http://www.w3.org/2000/svg";
function add(parent, tag, attrs, text) {
  const el = document.createElementNS(NS, tag);
  for (const k in attrs) el.setAttribute(k, attrs[k]);
  if (text) el.textContent = text;
  parent.appendChild(el);
}
const labels = document.getElementById("labels"), shields = document.getElementById("shields");
for (const [t, x, y, size, style] of places) {
  const a = { x, y, "font-size": size || 24 };
  if (style === "b") a["font-weight"] = 700;
  if (style === "g") { a.fill = "#5f9463"; a.stroke = "none"; }
  if (style === "w") { a.fill = "#4a74a8"; a.stroke = "none"; }
  if (style === "d") { a.fill = "#a59a88"; }
  if ("gwdi".includes(style || "-")) a["font-style"] = "italic";
  add(labels, "text", a, t);
}
for (const [t, x, y] of roads) {
  const w = t.length === 1 ? 24 : t.length === 2 ? 34 : 46;
  add(shields, "rect", { x: x - w / 2, y: y - 13, width: w, height: 26, fill: t[0] === "E" ? "#6aa33e" : "#dc5f62", stroke: "#fff", "stroke-opacity": .5 });
  add(shields, "text", { x, y: y + 7 }, t);
}
</script>
</body>
</html>
